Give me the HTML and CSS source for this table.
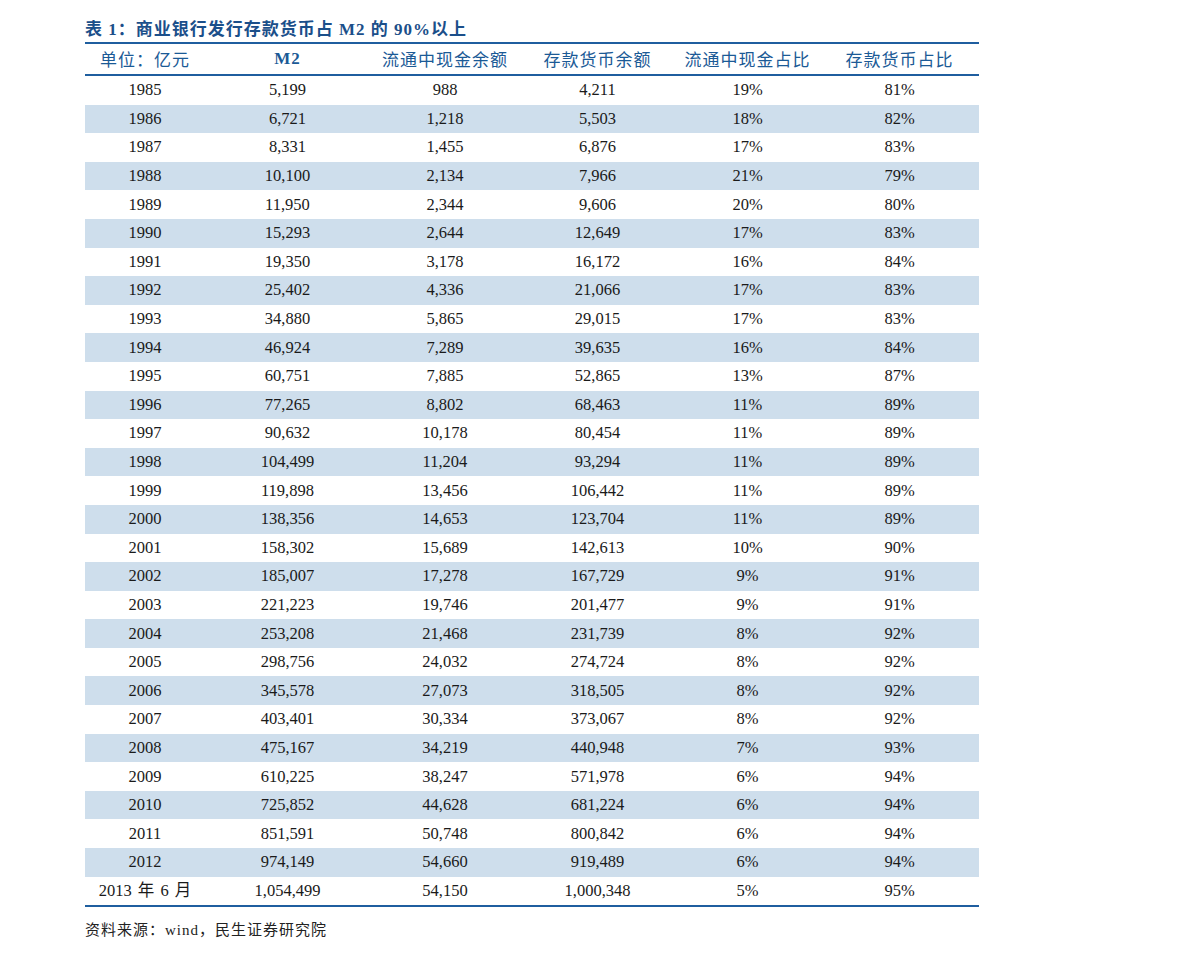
FILE: index.html
```html
<!DOCTYPE html>
<html lang="zh-CN">
<head>
<meta charset="utf-8">
<title>表1</title>
<link rel="stylesheet" href="styles.css">
</head>
<body>
<div class="report">
  <div class="title">表 1：商业银行发行存款货币占 M2 的 90%以上</div>
  <table class="data">
    <colgroup>
      <col class="c1"><col class="c2"><col class="c3"><col class="c4"><col class="c5"><col class="c6">
    </colgroup>
    <thead>
      <tr><th>单位：亿元</th><th class="latin">M2</th><th>流通中现金余额</th><th>存款货币余额</th><th>流通中现金占比</th><th>存款货币占比</th></tr>
    </thead>
    <tbody>
      <tr><td>1985</td><td>5,199</td><td>988</td><td>4,211</td><td>19%</td><td>81%</td></tr>
      <tr><td>1986</td><td>6,721</td><td>1,218</td><td>5,503</td><td>18%</td><td>82%</td></tr>
      <tr><td>1987</td><td>8,331</td><td>1,455</td><td>6,876</td><td>17%</td><td>83%</td></tr>
      <tr><td>1988</td><td>10,100</td><td>2,134</td><td>7,966</td><td>21%</td><td>79%</td></tr>
      <tr><td>1989</td><td>11,950</td><td>2,344</td><td>9,606</td><td>20%</td><td>80%</td></tr>
      <tr><td>1990</td><td>15,293</td><td>2,644</td><td>12,649</td><td>17%</td><td>83%</td></tr>
      <tr><td>1991</td><td>19,350</td><td>3,178</td><td>16,172</td><td>16%</td><td>84%</td></tr>
      <tr><td>1992</td><td>25,402</td><td>4,336</td><td>21,066</td><td>17%</td><td>83%</td></tr>
      <tr><td>1993</td><td>34,880</td><td>5,865</td><td>29,015</td><td>17%</td><td>83%</td></tr>
      <tr><td>1994</td><td>46,924</td><td>7,289</td><td>39,635</td><td>16%</td><td>84%</td></tr>
      <tr><td>1995</td><td>60,751</td><td>7,885</td><td>52,865</td><td>13%</td><td>87%</td></tr>
      <tr><td>1996</td><td>77,265</td><td>8,802</td><td>68,463</td><td>11%</td><td>89%</td></tr>
      <tr><td>1997</td><td>90,632</td><td>10,178</td><td>80,454</td><td>11%</td><td>89%</td></tr>
      <tr><td>1998</td><td>104,499</td><td>11,204</td><td>93,294</td><td>11%</td><td>89%</td></tr>
      <tr><td>1999</td><td>119,898</td><td>13,456</td><td>106,442</td><td>11%</td><td>89%</td></tr>
      <tr><td>2000</td><td>138,356</td><td>14,653</td><td>123,704</td><td>11%</td><td>89%</td></tr>
      <tr><td>2001</td><td>158,302</td><td>15,689</td><td>142,613</td><td>10%</td><td>90%</td></tr>
      <tr><td>2002</td><td>185,007</td><td>17,278</td><td>167,729</td><td>9%</td><td>91%</td></tr>
      <tr><td>2003</td><td>221,223</td><td>19,746</td><td>201,477</td><td>9%</td><td>91%</td></tr>
      <tr><td>2004</td><td>253,208</td><td>21,468</td><td>231,739</td><td>8%</td><td>92%</td></tr>
      <tr><td>2005</td><td>298,756</td><td>24,032</td><td>274,724</td><td>8%</td><td>92%</td></tr>
      <tr><td>2006</td><td>345,578</td><td>27,073</td><td>318,505</td><td>8%</td><td>92%</td></tr>
      <tr><td>2007</td><td>403,401</td><td>30,334</td><td>373,067</td><td>8%</td><td>92%</td></tr>
      <tr><td>2008</td><td>475,167</td><td>34,219</td><td>440,948</td><td>7%</td><td>93%</td></tr>
      <tr><td>2009</td><td>610,225</td><td>38,247</td><td>571,978</td><td>6%</td><td>94%</td></tr>
      <tr><td>2010</td><td>725,852</td><td>44,628</td><td>681,224</td><td>6%</td><td>94%</td></tr>
      <tr><td>2011</td><td>851,591</td><td>50,748</td><td>800,842</td><td>6%</td><td>94%</td></tr>
      <tr><td>2012</td><td>974,149</td><td>54,660</td><td>919,489</td><td>6%</td><td>94%</td></tr>
      <tr><td class="mixed">2013 年 6 月</td><td>1,054,499</td><td>54,150</td><td>1,000,348</td><td>5%</td><td>95%</td></tr>
    </tbody>
  </table>
  <div class="source">资料来源：wind，民生证券研究院</div>
</div>
</body>
</html>
```

FILE: styles.css
```css
html, body {
  margin: 0;
  padding: 0;
  background: #ffffff;
}

.report {
  margin: 0 0 0 85px;
  padding-top: 18px;
  width: 894px;
}

.title {
  font-family: "Liberation Serif", "Noto Sans CJK SC", serif;
  font-weight: bold;
  font-size: 17px;
  line-height: 23px;
  color: #1b4f8a;
  letter-spacing: 1px;
  height: 24px;
  white-space: nowrap;
}

.data {
  width: 894px;
  border-collapse: collapse;
  table-layout: fixed;
  border-top: 2px solid #1f5e9f;
  border-bottom: 2px solid #1f5e9f;
}

.c1 { width: 120px; }
.c2 { width: 165px; }
.c3 { width: 150px; }
.c4 { width: 155px; }
.c5 { width: 145px; }
.c6 { width: 159px; }

.data th {
  height: 30px;
  padding: 0;
  font-family: "Noto Sans CJK SC", sans-serif;
  font-weight: normal;
  font-size: 17px;
  color: #1b5a96;
  text-align: center;
  border-bottom: 2px solid #1f5e9f;
  letter-spacing: 1px;
  line-height: 28px;
}

.data th.latin {
  font-family: "Liberation Serif", serif;
  font-weight: bold;
  font-size: 17px;
}

.data td {
  height: 28.6px;
  padding: 0;
  font-family: "Liberation Serif", "Noto Sans CJK SC", serif;
  font-size: 16.5px;
  color: #1a1a1a;
  text-align: center;
  line-height: 28px;
}

.data td.mixed {
  word-spacing: 2px;
}

.data tbody tr:nth-child(even) td {
  background: #cedeec;
}

.source {
  margin-top: 13px;
  font-family: "Liberation Serif", "Noto Sans CJK SC", serif;
  font-size: 15px;
  letter-spacing: 1px;
  color: #222;
  line-height: 20px;
}
```
